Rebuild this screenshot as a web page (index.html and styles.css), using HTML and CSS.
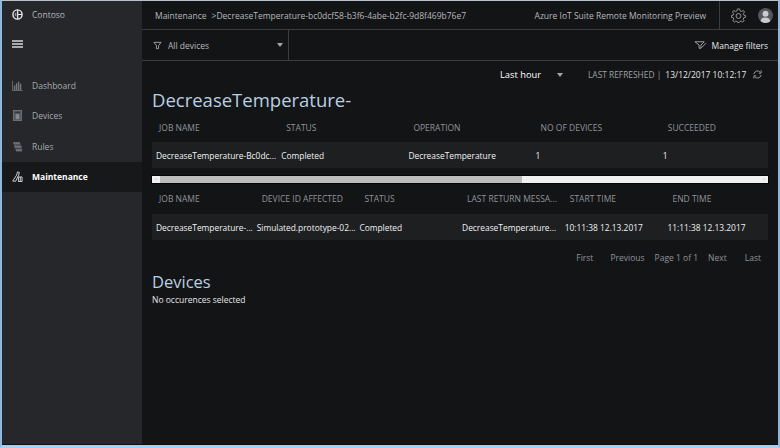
FILE: index.html
```html
<!DOCTYPE html>
<html lang="en">
<head>
    <meta charset="UTF-8">
    <title>Azure IoT Suite Remote Monitoring Preview</title>
    <link rel="stylesheet" href="styles.css">
</head>
<body>
    <div class="window">
        <aside class="sidebar">
            <div class="brand">
                <svg class="brand-logo" viewBox="0 0 12 12"><circle cx="6" cy="6" r="5" fill="none" stroke="#eceef0" stroke-width="1.500"/><path d="M6.200 1V11M6.200 6H11" fill="none" stroke="#eceef0" stroke-width="1.300"/><path d="M2.800 6A2.500 2.500 0 0 1 4.800 3.500V8.500A2.500 2.500 0 0 1 2.800 6Z" fill="#8c8f92"/></svg>
                <span>Contoso</span>
            </div>
            <button class="burger"><span></span><span></span><span></span></button>
            <nav class="side-nav">
                <a href="#" class="nav-item">
                    <svg class="nav-icon" viewBox="0 0 12 12"><path d="M.5 1V11.500H11.500" fill="none" stroke="#6b6e72"/><path d="M2 6H3.500V11H2ZM4.200 3.500H5.700V11H4.200ZM6.400 2H7.900V11H6.400ZM8.600 4H10.100V11H8.600Z" fill="#75787c"/></svg>
                    <span>Dashboard</span>
                </a>
                <a href="#" class="nav-item">
                    <svg class="nav-icon" viewBox="0 0 12 12"><rect x="1.500" y=".5" width="9" height="11" fill="#55585c" stroke="#6f7276"/><path d="M3 2.500H9" stroke="#2a2c2f"/><rect x="4" y="4.500" width="4" height="5.500" fill="#85888c"/></svg>
                    <span>Devices</span>
                </a>
                <a href="#" class="nav-item">
                    <svg class="nav-icon" viewBox="0 0 12 12"><path d="M1 1H8.500L9.500 4H2ZM2 4.500H10L11 8H3ZM3.500 8.500H11V11.500H4.500Z" fill="#5f6266"/><path d="M2 2.500H8M3 6H10M4.500 10H11" stroke="#8b8e92" stroke-width=".8" stroke-dasharray="1.200 1"/></svg>
                    <span>Rules</span>
                </a>
                <a href="#" class="nav-item active">
                    <svg class="nav-icon" viewBox="0 0 12 12"><path d="M.8 11 5 4.500 6 1l2 .5-.8 3L4 11.200ZM7 6.500H11V11.500H7ZM9 6.500V11.500" fill="none" stroke="#d8dadc"/></svg>
                    <span>Maintenance</span>
                </a>
            </nav>
        </aside>

        <div class="content">
            <header class="topbar">
                <div class="crumbs">
                    <span>Maintenance</span>
                    <span class="crumb-sep">&gt;</span>
                    <span>DecreaseTemperature-bc0dcf58-b3f6-4abe-b2fc-9d8f469b76e7</span>
                </div>
                <div class="product">Azure IoT Suite Remote Monitoring Preview</div>
                <div class="top-actions">
                    <svg class="gear" viewBox="0 0 16 16"><path d="M6.800 1H9.200L9.600 3 11.300 3.700 13 2.600 14.400 4.300 13.200 5.900 13.800 7.700 15.500 8.100V9.900L13.700 10.300 13 12 14 13.600 12.400 15 10.900 13.900 9.200 14.600 8.800 15.500H7.200L6.800 14.600 5.100 13.900 3.600 15 2 13.600 3 12 2.300 10.300.5 9.900V8.100L2.200 7.700 2.800 5.900 1.600 4.300 3 2.600 4.700 3.700 6.400 3Z" fill="none" stroke="#a5a8ab" stroke-width=".9"/><circle cx="8" cy="8.500" r="2.600" fill="none" stroke="#a5a8ab" stroke-width=".9"/></svg>
                    <svg class="avatar" viewBox="0 0 16 16"><circle cx="8" cy="8" r="8" fill="#54575b"/><circle cx="8" cy="6.200" r="3.200" fill="#c9cbcd"/><path d="M2.800 14C3.500 10.800 5.500 10 8 10s4.500.8 5.200 4A8 8 0 0 1 2.800 14Z" fill="#c9cbcd"/></svg>
                </div>
            </header>

            <div class="filterbar">
                <div class="device-select">
                    <svg class="funnel" viewBox="0 0 10 10"><path d="M1 1.500H9L6.200 5V8.500H3.800V5Z" fill="none" stroke="#a5a8ab"/></svg>
                    <span>All devices</span>
                    <i class="caret"></i>
                </div>
                <div class="manage">
                    <svg class="funnel-wide" viewBox="0 0 14 10"><path d="M1 1.500H11L7.500 5V8.500H5.500V5Z" fill="none" stroke="#a5a8ab"/><path d="M8 8 13 3" stroke="#a5a8ab"/></svg>
                    <span>Manage filters</span>
                </div>
            </div>

            <main class="main">
                <div class="refresh-row">
                    <span class="range">Last hour</span>
                    <i class="caret range-caret"></i>
                    <span class="refreshed-label">LAST REFRESHED |</span>
                    <span class="refreshed-time">13/12/2017 10:12:17</span>
                    <svg class="refresh" viewBox="0 0 10 10"><path d="M1 4.500A4 4 0 0 1 8 2.500M9 5.500A4 4 0 0 1 2 7.500" fill="none" stroke="#a5a8ab"/><path d="M9 .5V3.500H6.500M1 9.500V6.500H3.500" fill="none" stroke="#a5a8ab"/></svg>
                </div>

                <h1 class="title">DecreaseTemperature-</h1>

                <div class="grid cols-5 grid-head head-first">
                    <span>JOB NAME</span><span>STATUS</span><span>OPERATION</span><span>NO OF DEVICES</span><span>SUCCEEDED</span>
                </div>
                <div class="grid cols-5 grid-row">
                    <span>DecreaseTemperature-Bc0dc...</span><span>Completed</span><span>DecreaseTemperature</span><span>1</span><span>1</span>
                </div>

                <div class="scrollbar">
                    <b class="arrow">&lt;</b>
                    <div class="thumb"></div>
                    <b class="arrow arrow-right">&gt;</b>
                </div>

                <div class="grid cols-6 grid-head head-second">
                    <span>JOB NAME</span><span>DEVICE ID AFFECTED</span><span>STATUS</span><span>LAST RETURN MESSA...</span><span>START TIME</span><span>END TIME</span>
                </div>
                <div class="grid cols-6 grid-row">
                    <span>DecreaseTemperature-...</span><span>Simulated.prototype-02...</span><span>Completed</span><span>DecreaseTemperature...</span><span>10:11:38 12.13.2017</span><span>11:11:38 12.13.2017</span>
                </div>

                <div class="pager">
                    <span>First</span><span class="pager-prev">Previous</span><span>Page 1 of 1</span><span>Next</span><span class="pager-last">Last</span>
                </div>

                <h2 class="subtitle">Devices</h2>
                <p class="empty">No occurences selected</p>
            </main>
        </div>
    </div>
</body>
</html>
```

FILE: styles.css
```css
* {
    box-sizing: border-box;
    margin: 0;
    padding: 0;
}

html, body {
    width: 780px;
    height: 448px;
    overflow: hidden;
}

body {
    font-family: "Open Sans", "Noto Sans", sans-serif;
    font-size: 8.500px;
    background-color: #9cc3e6;
    color: #fff;
}

/* marco de la ventana */
.window {
    display: flex;
    width: 780px;
    height: 448px;
    border-top: 1px solid #b9c2ca;
    border-left: 2px solid #8fb8de;
    border-right: 2px solid #8fb8de;
    border-bottom: 3px solid #a9cfee;
}

.sidebar {
    width: 140px;
    flex-shrink: 0;
    background-color: #25272a;
    border-bottom: 1px solid #111;
}

.brand {
    display: flex;
    align-items: center;
    height: 26px;
    padding-left: 10px;
    color: #b5b8bb;
}

.brand-logo {
    width: 11px;
    height: 11px;
    margin-right: 9px;
}

.burger {
    display: flex;
    flex-direction: column;
    gap: 1.500px;
    width: 11px;
    margin: 13px 0 0 10px;
    background: none;
    border: none;
}

.burger span {
    display: block;
    height: 1.500px;
    background-color: #a8abae;
}

.side-nav {
    margin-top: 22.500px;
}

.nav-item {
    display: flex;
    align-items: center;
    height: 30.500px;
    padding-left: 10px;
    color: #a5a9ae;
    text-decoration: none;
}

.nav-icon {
    width: 11px;
    height: 11px;
    margin-right: 9px;
}

.nav-item.active {
    background-color: #17181a;
    color: #fff;
    font-weight: 700;
}

.content {
    flex: 1;
    min-width: 0;
    background-color: #131416;
    border-bottom: 1px solid #0c0c0d;
}

.topbar {
    display: flex;
    align-items: center;
    height: 29px;
    padding-left: 13px;
    border-bottom: 1px solid #3a3c3f;
    color: #b5b8bb;
}

.crumbs {
    flex: 1;
    display: flex;
    white-space: nowrap;
}

.crumb-sep {
    margin: 0 0 0 5px;
}

.product {
    padding-right: 13px;
}

.top-actions {
    display: flex;
    align-items: center;
    gap: 12px;
    width: 59px;
    height: 28px;
    padding-left: 11px;
    border-left: 1px solid #3a3c3f;
}

.gear {
    width: 15px;
    height: 15px;
}

.avatar {
    width: 15px;
    height: 15px;
}

.filterbar {
    display: flex;
    justify-content: space-between;
    align-items: center;
    height: 31px;
    border-bottom: 1px solid #3a3c3f;
    color: #b5b8bb;
}

.device-select {
    display: flex;
    align-items: center;
    width: 147px;
    height: 30px;
    padding: 0 5px 0 11px;
    border-right: 1px solid #3a3c3f;
}

.funnel {
    width: 9px;
    height: 9px;
    margin-right: 6px;
}

.caret {
    width: 0;
    height: 0;
    border-left: 3.500px solid transparent;
    border-right: 3.500px solid transparent;
    border-top: 4px solid #a5a8ab;
    margin-left: auto;
}

.manage {
    display: flex;
    align-items: center;
    padding-right: 10px;
    color: #e4e6e8;
}

.funnel-wide {
    width: 13px;
    height: 10px;
    margin-right: 5px;
}

.main {
    padding: 0 9px 0 10px;
}

.refresh-row {
    display: flex;
    align-items: center;
    height: 27px;
    padding-left: 348px;
    white-space: nowrap;
}

.range {
    width: 57px;
    font-size: 9.300px;
}

.range-caret {
    margin: 0;
}

.refreshed-label {
    margin-left: 25px;
    color: #9ea1a5;
    font-size: 8.400px;
}

.refreshed-time {
    margin-left: 4px;
    color: #e4e6e8;
}

.refresh {
    width: 9px;
    height: 9px;
    margin-left: 7px;
}

.title {
    font-size: 18.500px;
    font-weight: 400;
    line-height: 24px;
    color: #b9cfe0;
}

.grid {
    display: grid;
    width: 616px;
}

.cols-5 {
    grid-template-columns: repeat(5, 127.200px);
}

.cols-6 {
    grid-template-columns: repeat(6, 102.700px);
}

.grid span {
    white-space: nowrap;
}

.grid-head {
    align-items: center;
    color: #8f9398;
    font-size: 8.500px;
}

.head-first {
    height: 30px;
    padding-top: 1px;
}

.head-second {
    height: 31px;
}

.grid-head span {
    padding-left: 7px;
}

.grid-row {
    height: 26px;
    align-items: center;
    background-color: #1d1f21;
    color: #f0f1f2;
    font-size: 8.400px;
}

.grid-row span {
    padding-left: 2px;
}

.grid-row span:first-child {
    padding-left: 4px;
}

.scrollbar {
    display: flex;
    align-items: center;
    width: 616px;
    height: 7px;
    margin-top: 8px;
    background-color: #f0f0f0;
    outline: 1px solid #050505;
}

.arrow {
    width: 8px;
    font-size: 6px;
    font-weight: 400;
    line-height: 7px;
    text-align: center;
    color: #b0b0b0;
}

.thumb {
    width: 362px;
    height: 7px;
    background-color: #bdbdbd;
}

.arrow-right {
    margin-left: auto;
}

.pager {
    display: flex;
    justify-content: flex-end;
    gap: 10px;
    height: 31px;
    padding: 3px 7px 0 0;
    align-items: center;
    width: 616px;
    color: #8f9398;
}

.pager-prev {
    margin-left: 7px;
}

.pager-last {
    margin-left: 8px;
}

.subtitle {
    font-size: 16.500px;
    font-weight: 400;
    line-height: 22px;
    color: #b9cfe0;
}

.empty {
    line-height: 14px;
    color: #e4e6e8;
}
```
